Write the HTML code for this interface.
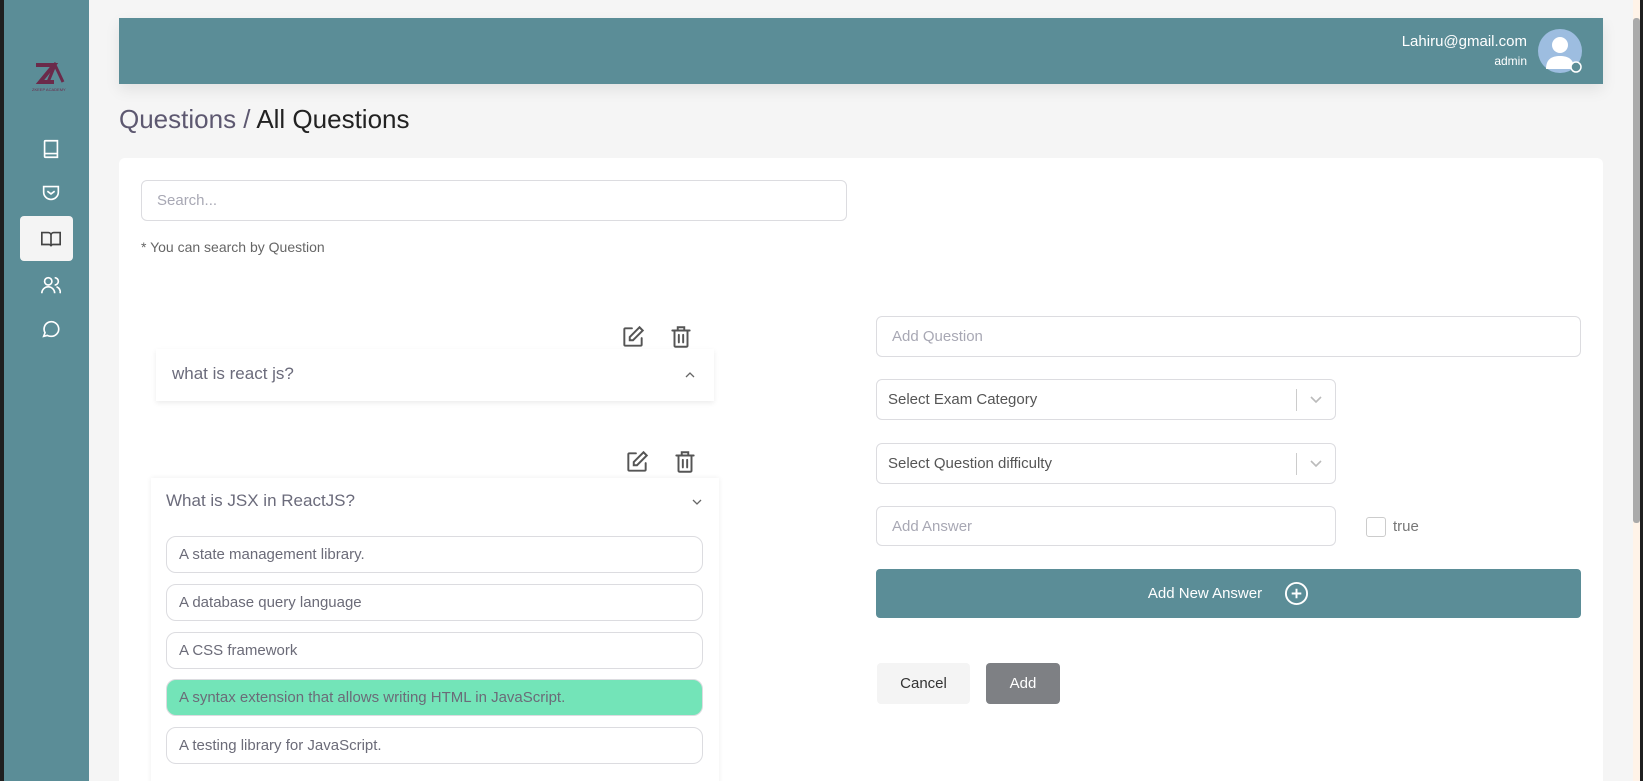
<!DOCTYPE html>
<html style="overflow:hidden;height:781px"><head><meta charset="utf-8"><style>
*{box-sizing:border-box;margin:0;padding:0}
body{width:1643px;height:781px;overflow:hidden;background:#f5f5f5;font-family:"Liberation Sans",sans-serif;position:relative;color:#6b6b7b}
.abs{position:absolute}
.side{left:0;top:0;width:89px;height:781px;background:#5b8d97;border-left:4px solid #1f1f1f}
.ic{position:absolute;left:36px;width:22px;height:22px}
.inp{position:absolute;border:1px solid #dcdce0;border-radius:6px;background:#fff;font-size:15px;color:#a8a8b4;padding-left:15px;display:flex;align-items:center}
.opt{position:absolute;left:166px;width:537px;height:37px;border:1px solid #dcdce0;border-radius:10px;font-size:15px;color:#6b6b78;padding-left:12px;display:flex;align-items:center;background:#fff}
</style></head><body>
<div class="abs side">
  <svg class="abs" style="left:26px;top:62px" width="36" height="30" viewBox="0 0 36 30"><path d="M6 3h18l-14 17h14" fill="none" stroke="#6b2a4a" stroke-width="4"/><path d="M18 20l7-17 8 17" fill="none" stroke="#6b2a4a" stroke-width="3"/><text x="2" y="29" font-size="4" fill="#6b2a4a" font-family="Liberation Sans">ZKEEP ACADEMY</text></svg>
  <svg class="ic" style="top:138px" viewBox="0 0 24 24" fill="none" stroke="#fff" stroke-width="1.8"><path d="M5 4a1 1 0 011-1h13v18H6a1 1 0 01-1-1zM5 17h14"/></svg>
  <svg class="ic" style="top:182px" viewBox="0 0 24 24" fill="none" stroke="#fff" stroke-width="1.8"><path d="M4 5h16v6a8 8 0 01-16 0zM8 10l4 3 4-3"/></svg>
  <div class="abs" style="left:16px;top:216px;width:53px;height:45px;background:#f4f4f4;border-radius:4px"></div>
  <svg class="ic" style="top:228px" viewBox="0 0 24 24" fill="none" stroke="#444" stroke-width="1.8"><path d="M2 5h7a3 3 0 013 3v12a2 2 0 00-2-2H2zM22 5h-7a3 3 0 00-3 3v12a2 2 0 012-2h8z"/></svg>
  <svg class="ic" style="top:274px" viewBox="0 0 24 24" fill="none" stroke="#fff" stroke-width="1.8"><circle cx="9" cy="8" r="4"/><path d="M2 21a7 7 0 0114 0M16 4a4 4 0 010 8M18 14a6 6 0 014 7"/></svg>
  <svg class="ic" style="top:318px" viewBox="0 0 24 24" fill="none" stroke="#fff" stroke-width="1.8"><path d="M4 20l1.5-4A8 8 0 1112 20a8 8 0 01-4-1z"/></svg>
</div>
<div class="abs" style="left:119px;top:18px;width:1484px;height:66px;background:#5b8d97;box-shadow:0 6px 14px rgba(0,0,0,.08)"></div>
<div class="abs" style="right:116px;top:33px;color:#fff;font-size:15px;text-align:right;width:200px">Lahiru@gmail.com</div>
<div class="abs" style="right:116px;top:54px;color:#fff;font-size:12px;text-align:right;width:100px">admin</div>
<svg class="abs" style="left:1538px;top:29px" width="46" height="46" viewBox="0 0 46 46"><circle cx="22" cy="22" r="22" fill="#9dbde0"/><circle cx="22" cy="16" r="8" fill="#fff"/><path d="M8 40c0-10 6-13 14-13s14 3 14 13z" fill="#fff"/><circle cx="38" cy="38" r="5" fill="#5b8d97" stroke="#fff" stroke-width="1.5"/></svg>
<div class="abs" style="left:119px;top:104px;font-size:26px;color:#5d5870">Questions / <span style="color:#222">All Questions</span></div>
<div class="abs" style="left:119px;top:158px;width:1484px;height:623px;background:#fff;border-radius:6px 6px 0 0"></div>
<div class="inp" style="left:141px;top:180px;width:706px;height:41px">Search...</div>
<div class="abs" style="left:141px;top:239px;font-size:14px;color:#666">* You can search by Question</div>

<svg class="abs" style="left:620px;top:324px" width="26" height="26" viewBox="0 0 24 24" fill="none" stroke="#555" stroke-width="1.8" stroke-linecap="round"><path d="M11 4H5a1 1 0 00-1 1v14a1 1 0 001 1h14a1 1 0 001-1v-6"/><path d="M18 3l3 3-9 9H9v-3z"/></svg>
<svg class="abs" style="left:668px;top:324px" width="26" height="26" viewBox="0 0 24 24" fill="none" stroke="#555" stroke-width="1.8" stroke-linecap="round"><path d="M4 6h16M9 6V3h6v3M6 6v14a1 1 0 001 1h10a1 1 0 001-1V6M10 10v7M14 10v7"/></svg>
<div class="abs" style="left:156px;top:349px;width:558px;height:52px;background:#fff;box-shadow:0 2px 5px rgba(0,0,0,.08);font-size:17px;padding:15px 16px;color:#6b6b7b">what is react js?<svg style="position:absolute;right:18px;top:21px" width="12" height="10" viewBox="0 0 12 10" fill="none" stroke="#666" stroke-width="1.3"><path d="M2 7l4-4 4 4"/></svg></div>

<svg class="abs" style="left:624px;top:449px" width="26" height="26" viewBox="0 0 24 24" fill="none" stroke="#555" stroke-width="1.8" stroke-linecap="round"><path d="M11 4H5a1 1 0 00-1 1v14a1 1 0 001 1h14a1 1 0 001-1v-6"/><path d="M18 3l3 3-9 9H9v-3z"/></svg>
<svg class="abs" style="left:672px;top:449px" width="26" height="26" viewBox="0 0 24 24" fill="none" stroke="#555" stroke-width="1.8" stroke-linecap="round"><path d="M4 6h16M9 6V3h6v3M6 6v14a1 1 0 001 1h10a1 1 0 001-1V6M10 10v7M14 10v7"/></svg>
<div class="abs" style="left:151px;top:478px;width:568px;height:310px;background:#fff;box-shadow:0 0 5px rgba(0,0,0,.07)"></div>
<div class="abs" style="left:166px;top:491px;font-size:17px;color:#6b6b7b">What is JSX in ReactJS?</div>
<svg class="abs" style="left:691px;top:497px" width="12" height="10" viewBox="0 0 12 10" fill="none" stroke="#666" stroke-width="1.3"><path d="M2 3l4 4 4-4"/></svg>
<div class="opt" style="top:536px">A state management library.</div>
<div class="opt" style="top:584px">A database query language</div>
<div class="opt" style="top:632px">A CSS framework</div>
<div class="opt" style="top:679px;background:#73e4b8">A syntax extension that allows writing HTML in JavaScript.</div>
<div class="opt" style="top:727px">A testing library for JavaScript.</div>

<div class="inp" style="left:876px;top:316px;width:705px;height:41px">Add Question</div>
<div class="inp" style="left:876px;top:379px;width:460px;height:41px;color:#555;padding-left:11px">Select Exam Category<span style="position:absolute;right:38px;top:9px;height:22px;border-left:1px solid #ccc"></span><svg style="position:absolute;right:12px;top:15px" width="14" height="10" viewBox="0 0 14 10" fill="none" stroke="#bbb" stroke-width="1.6"><path d="M2 2l5 5 5-5"/></svg></div>
<div class="inp" style="left:876px;top:443px;width:460px;height:41px;color:#555;padding-left:11px">Select Question difficulty<span style="position:absolute;right:38px;top:9px;height:22px;border-left:1px solid #ccc"></span><svg style="position:absolute;right:12px;top:15px" width="14" height="10" viewBox="0 0 14 10" fill="none" stroke="#bbb" stroke-width="1.6"><path d="M2 2l5 5 5-5"/></svg></div>
<div class="inp" style="left:876px;top:506px;width:460px;height:40px">Add Answer</div>
<div class="abs" style="left:1366px;top:517px;width:20px;height:20px;border:1px solid #ccc;border-radius:3px"></div>
<div class="abs" style="left:1393px;top:518px;font-size:15px;color:#777">true</div>
<div class="abs" style="left:876px;top:569px;width:705px;height:49px;background:#5b8d97;border-radius:4px;color:#fff;font-size:15px;display:flex;align-items:center;justify-content:center">Add New Answer<svg style="margin-left:22px" width="25" height="25" viewBox="0 0 26 26" fill="none" stroke="#fff" stroke-width="2"><circle cx="13" cy="13" r="11"/><path d="M13 8v10M8 13h10"/></svg></div>
<div class="abs" style="left:877px;top:663px;width:93px;height:41px;background:#f4f4f4;border-radius:4px;font-size:15px;color:#333;display:flex;align-items:center;justify-content:center">Cancel</div>
<div class="abs" style="left:986px;top:663px;width:74px;height:41px;background:#7e8084;border-radius:4px;font-size:15px;color:#fff;display:flex;align-items:center;justify-content:center">Add</div>

<div class="abs" style="left:1633px;top:0;width:10px;height:781px;background:#fff3e8"></div>
<div class="abs" style="left:1633px;top:18px;width:7px;height:505px;background:#aaa;border-radius:3px"></div>
<div class="abs" style="left:1640px;top:0;width:3px;height:781px;background:#1f1f1f"></div>
</body></html>
